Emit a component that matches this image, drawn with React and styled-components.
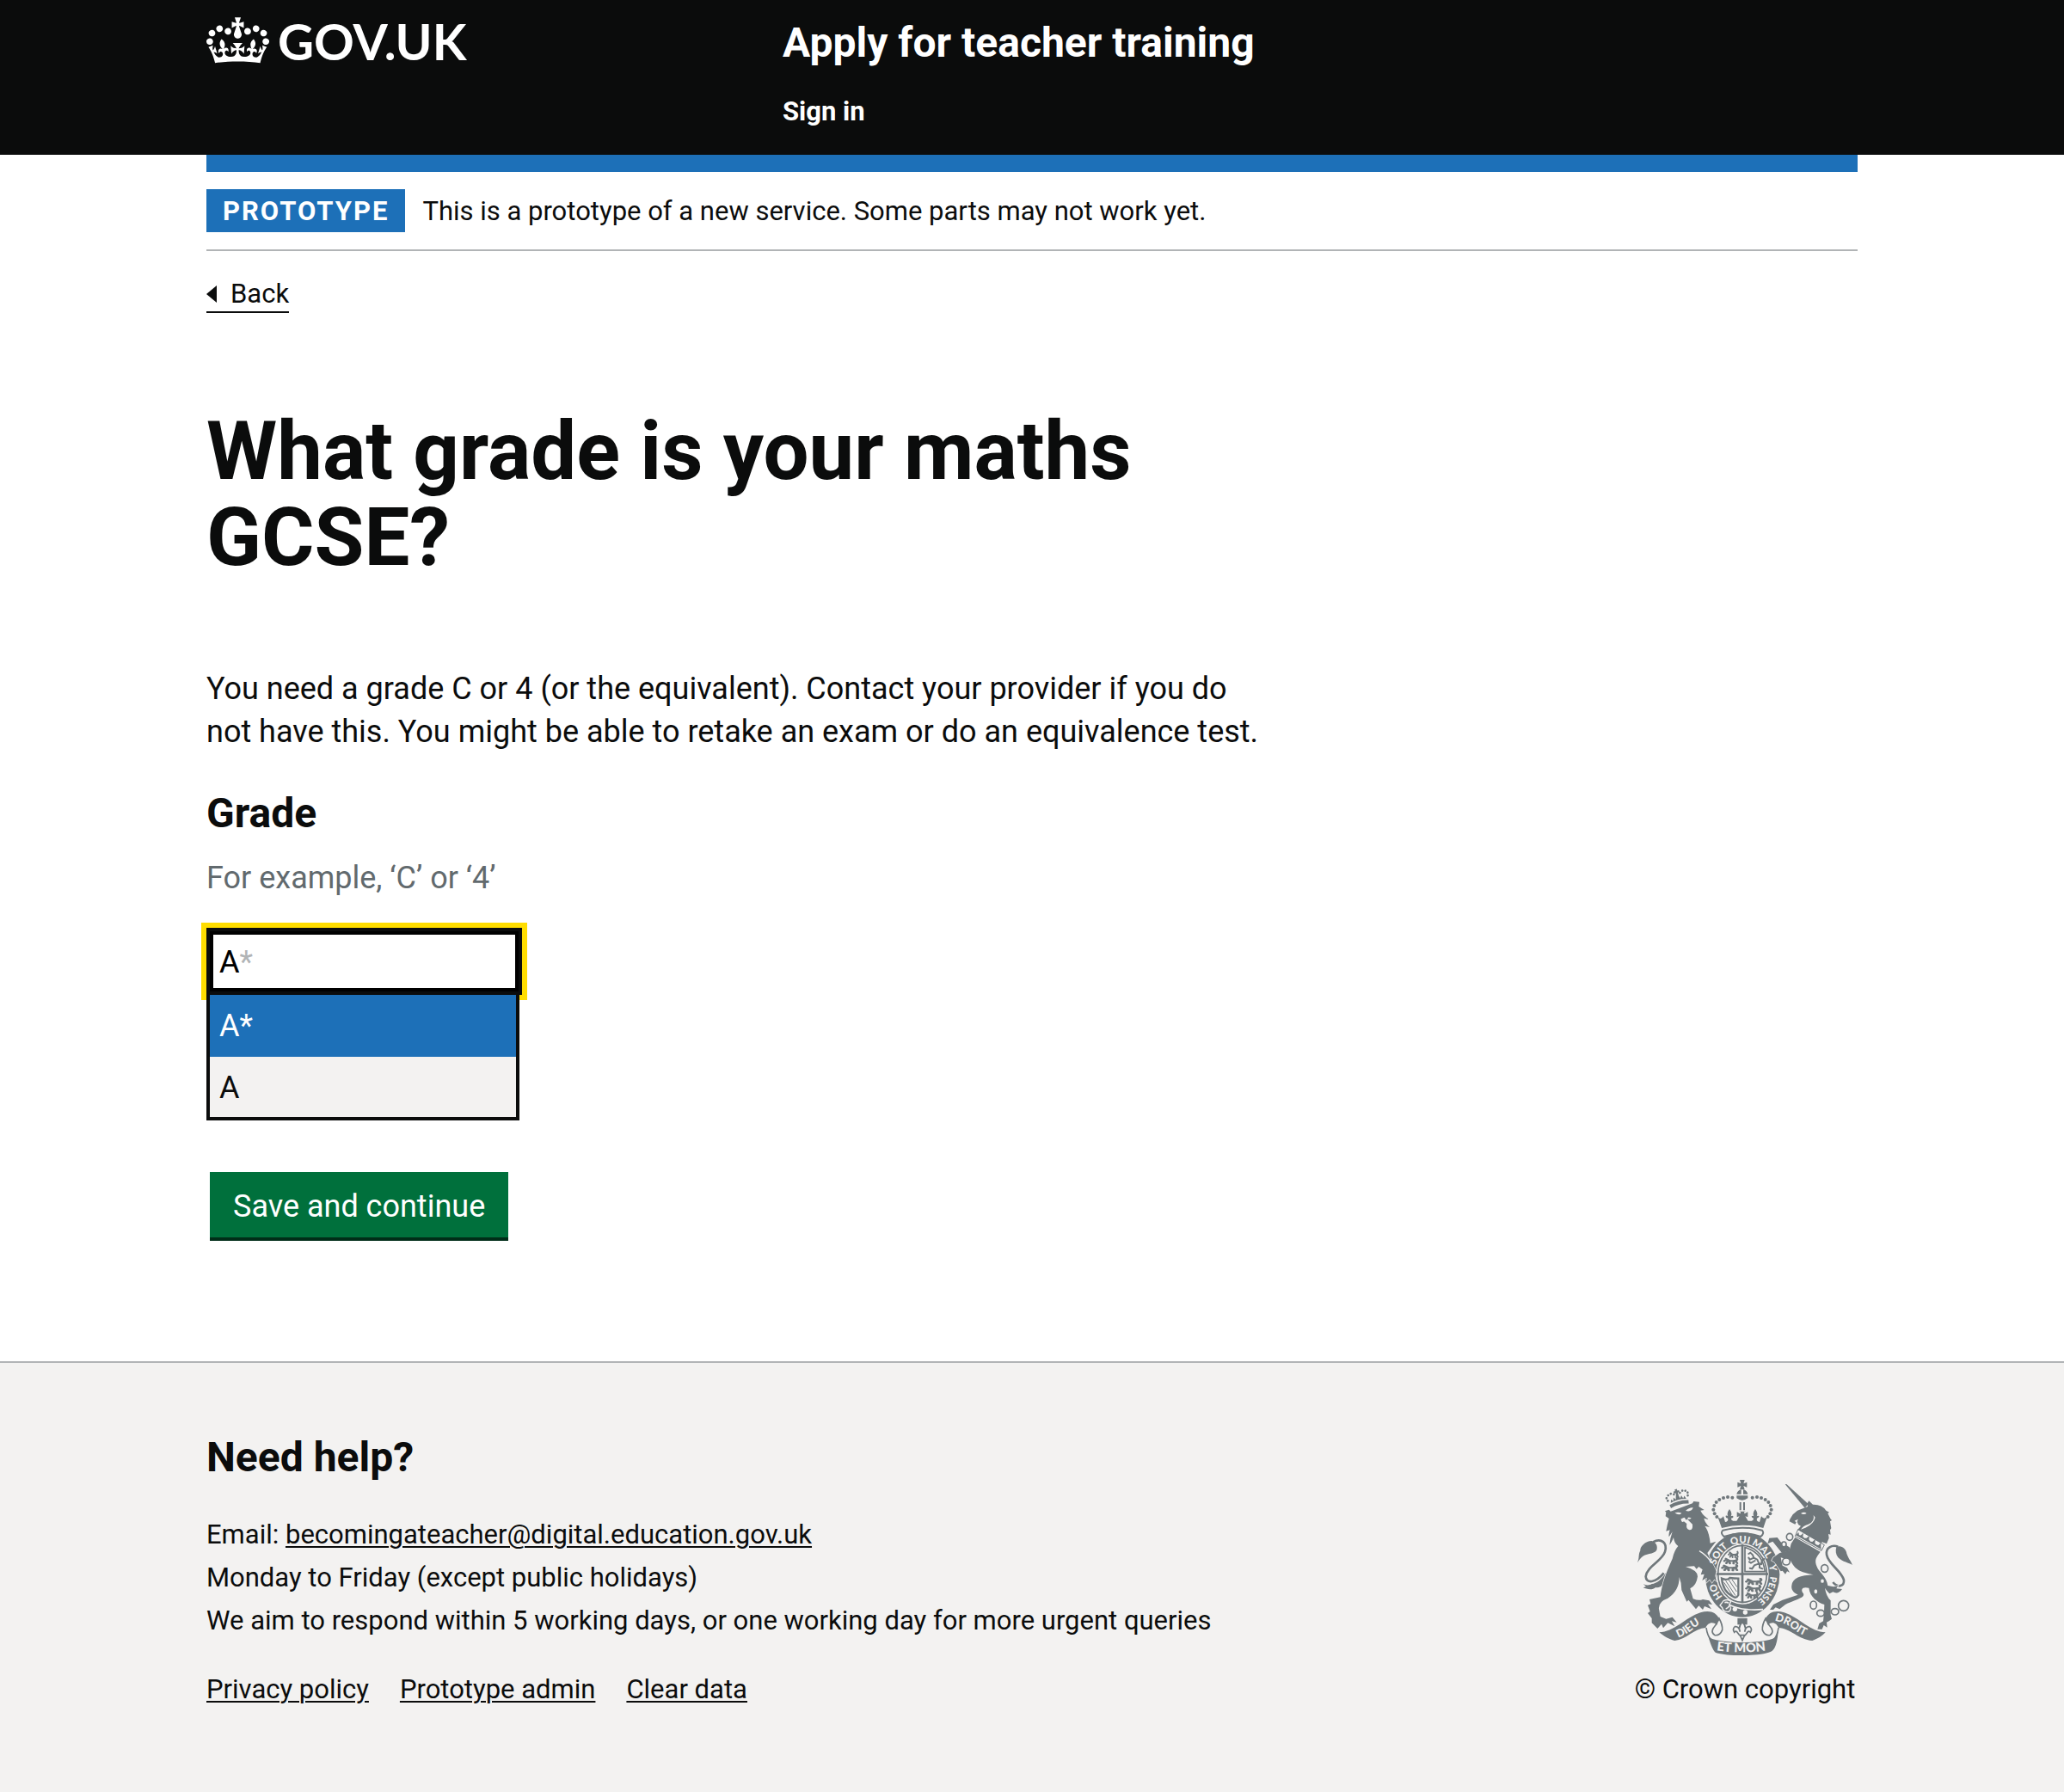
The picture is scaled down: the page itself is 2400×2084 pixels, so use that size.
import React, { useState } from "react";
import styled, { createGlobalStyle } from "styled-components";

const ink = "#0b0c0c";
const blue = "#1d70b8";
const rule = "#b1b4b6";
const pale = "#f3f2f1";
const crestGrey = "#6f777b";

const GlobalStyle = createGlobalStyle`
  *, *::before, *::after { box-sizing: border-box; }
  html { background: ${pale}; }
  body {
    margin: 0;
    background: #fff;
    color: ${ink};
    font-family: Roboto, "Liberation Sans", sans-serif;
    font-size: 36px;
    line-height: 50px;
  }
`;

const Container = styled.div`
  max-width: 1920px;
  width: 80%;
  margin: 0 auto;
`;

const Header = styled.header`
  background: ${ink};
  color: #fff;
`;

const HeaderGrid = styled(Container)`
  display: grid;
  grid-template-columns: 67fr 125fr;
  align-items: start;
  padding: 20px 0 25px;
`;

const Logo = styled.a`
  display: inline-flex;
  align-items: flex-start;
  gap: 10px;
  color: #fff;
  font-family: Lato, Roboto, sans-serif;
  font-size: 58px;
  font-weight: 700;
  line-height: 56px;
  text-decoration: none;
`;

const Crown = styled.svg`
  display: block;
  width: 73px;
  height: 54px;
  fill: currentColor;
`;

const ServiceName = styled.a`
  display: block;
  color: #fff;
  font-size: 48px;
  font-weight: 700;
  line-height: 60px;
  text-decoration: none;
`;

const HeaderNav = styled.nav`
  margin-top: 25px;
  font-size: 31px;
  font-weight: 700;
`;

const HeaderNavLink = styled.a`
  color: #fff;
  text-decoration: none;
`;

const BlueBar = styled.div`
  height: 20px;
  background: ${blue};
`;

const PhaseBanner = styled.div`
  display: flex;
  align-items: baseline;
  gap: 20px;
  padding: 20px 0;
  border-bottom: 2px solid ${rule};
  font-size: 31px;
  line-height: 48px;
`;

const PhaseTag = styled.strong`
  padding: 2px 19px 0;
  background: ${blue};
  color: #fff;
  letter-spacing: 2px;
  text-transform: uppercase;
`;

const BackLink = styled.a`
  display: inline-flex;
  align-items: center;
  gap: 16px;
  margin-top: 28px;
  padding-top: 2px;
  border-bottom: 2px solid ${ink};
  color: ${ink};
  font-size: 31px;
  line-height: 40px;
  text-decoration: none;

  &::before {
    content: "";
    border: 10px solid transparent;
    border-left-width: 0;
    border-right: 12px solid ${ink};
  }
`;

const Main = styled.main`
  max-width: 1240px;
  padding: 110px 0 144px;
`;

const Title = styled.h1`
  margin: 0 0 101px;
  font-size: 94px;
  font-weight: 700;
  line-height: 100px;
`;

const Paragraph = styled.p`
  margin: 0 0 40px;
`;

const GradeLabel = styled.label`
  display: block;
  margin-bottom: 20px;
  font-size: 48px;
  font-weight: 700;
  line-height: 60px;
`;

const Hint = styled.div`
  margin-bottom: 33px;
  color: #626a6e;
`;

const Autocomplete = styled.div`
  position: relative;
  width: 367px;
  margin-bottom: 60px;
`;

const fieldStyle = `
  display: block;
  width: 100%;
  height: 78px;
  margin: 0;
  padding: 2px 11px 0;
  border: 4px solid ${ink};
  border-radius: 0;
  font: inherit;
`;

const HintInput = styled.input`
  ${fieldStyle}
  position: absolute;
  inset: 0 0 auto;
  background: #fff;
  color: ${rule};
`;

const GradeInput = styled.input`
  ${fieldStyle}
  position: relative;
  outline: 6px solid #ffdd00;
  background: transparent;
  box-shadow: inset 0 0 0 4px #000;
  color: #000;
`;

const Menu = styled.ul`
  position: relative;
  margin: 0 3px 0 0;
  padding: 0;
  border: 4px solid ${ink};
  border-top: 0;
  background: ${pale};
  list-style: none;
`;

const Option = styled.li`
  padding: 11px 11px 9px;
  border-bottom: 2px solid ${(p) => (p.$active ? blue : rule)};
  background: ${(p) => (p.$active ? blue : pale)};
  color: ${(p) => (p.$active ? "#fff" : ink)};

  &:last-child { border-bottom: 0; }
`;

const SaveButton = styled.button`
  display: block;
  margin: 0 4px;
  padding: 15px 27px 11px;
  border: 0;
  border-radius: 0;
  background: #00703c;
  box-shadow: 0 4px 0 #002d18;
  color: #fff;
  font: inherit;
  cursor: pointer;
`;

const Footer = styled.footer`
  border-top: 2px solid ${rule};
  background: ${pale};
  font-size: 31px;
`;

const FooterRow = styled(Container)`
  display: flex;
  align-items: flex-end;
  justify-content: space-between;
  gap: 60px;
  padding: 80px 0 95px;
`;

const FooterTitle = styled.h2`
  margin: 0 0 35px;
  font-size: 48px;
  font-weight: 700;
  line-height: 60px;
`;

const PlainList = styled.ul`
  display: flex;
  flex-direction: ${(p) => (p.$inline ? "row" : "column")};
  gap: ${(p) => (p.$inline ? "36px" : "0")};
  margin: 0;
  padding: 0;
  list-style: none;
`;

const FooterNav = styled.nav`
  margin-top: 30px;
`;

const FooterLink = styled.a`
  color: ${ink};
  text-decoration: underline;
  text-decoration-thickness: 2px;
  text-underline-offset: 3px;
`;

const Copyright = styled.a`
  display: flex;
  flex: none;
  flex-direction: column;
  align-items: center;
  gap: 15px;
  min-width: 262px;
  color: ${ink};
  text-decoration: none;
`;

const Crest = styled.svg`
  display: block;
  width: 250px;
  height: 204px;
  font-family: Lato, sans-serif;
  font-weight: 900;
`;

const CrownIcon = () => (
  <Crown viewBox="0 0 132 97" aria-hidden="true">
    <path
      fillRule="evenodd"
      d="M25 30.2c3.5 1.5 7.7-.2 9.1-3.7 1.5-3.6-.2-7.8-3.9-9.2-3.6-1.4-7.6.3-9.1 3.9-1.4 3.5.3 7.5 3.9 9zM9 39.5c3.6 1.5 7.8-.2 9.2-3.7 1.5-3.6-.2-7.8-3.9-9.1-3.6-1.5-7.6.2-9.1 3.8-1.4 3.5.3 7.5 3.8 9zM4.4 57.2c3.5 1.5 7.7-.2 9.1-3.8 1.5-3.6-.2-7.7-3.9-9.1-3.5-1.5-7.6.3-9.1 3.8-1.4 3.5.3 7.6 3.9 9.1zm38.3-21.4c3.5 1.5 7.7-.2 9.1-3.8 1.5-3.6-.2-7.7-3.9-9.1-3.6-1.5-7.6.3-9.1 3.8-1.3 3.6.4 7.7 3.9 9.1zm64.4-5.6c-3.6 1.5-7.8-.2-9.1-3.7-1.5-3.6.2-7.8 3.8-9.2 3.6-1.4 7.7.3 9.2 3.9 1.3 3.5-.4 7.5-3.9 9zm15.9 9.3c-3.6 1.5-7.7-.2-9.1-3.7-1.5-3.6.2-7.8 3.7-9.1 3.6-1.5 7.7.2 9.2 3.8 1.5 3.5-.3 7.5-3.8 9zm4.7 17.7c-3.6 1.5-7.8-.2-9.2-3.8-1.5-3.6.2-7.7 3.9-9.1 3.6-1.5 7.7.3 9.2 3.8 1.3 3.5-.4 7.6-3.9 9.1zM89.3 35.8c-3.6 1.5-7.8-.2-9.2-3.8-1.4-3.6.2-7.7 3.9-9.1 3.6-1.5 7.7.3 9.2 3.8 1.4 3.6-.3 7.7-3.9 9.1zM69.7 17.7l8.9 4.7V9.3l-8.9 2.8c-.2-.3-.5-.6-.9-.9L72.4 0H59.6l3.5 11.2c-.3.3-.6.5-.9.9l-8.8-2.8v13.1l8.8-4.7c.3.3.6.7.9.9l-5 15.4v.1c-.2.8-.4 1.6-.4 2.4 0 4.1 3.1 7.5 7 8.1h.2c.3 0 .7.1 1 .1.4 0 .7 0 1-.1h.2c4-.6 7.1-4.1 7.1-8.1 0-.8-.1-1.7-.4-2.4V34l-5.1-15.4c.4-.2.7-.6 1-.9zM66 92.8c16.9 0 32.8 1.1 47.1 3.2 4-16.9 8.9-26.7 14-33.5l-9.6-3.4c1 4.9 1.1 7.2 0 10.2-1.5-1.4-3-4.3-4.2-8.7L108.6 76c2.8-2 5-3.2 7.5-3.3-4.4 9.4-10 11.9-13.6 11.2-4.3-.8-6.3-4.6-5.6-7.9 1-4.7 5.7-5.9 8-.5 4.3-8.7-3-11.4-7.6-8.8 7.1-7.2 7.9-13.5 2.1-21.1-8 6.1-8.1 12.3-4.5 20.8-4.7-5.4-12.1-2.5-9.5 6.2 3.4-5.2 7.9-2 7.2 3.1-.6 4.3-6.4 7.8-13.5 7.2-10.3-.9-10.9-8-11.2-13.8 2.5-.5 7.1 1.8 11 7.3L80.2 60c-4.1 4.4-8 5.3-12.3 5.4 1.4-4.4 8-11.6 8-11.6H55.5s6.4 7.2 7.9 11.6c-4.2-.1-8-1-12.3-5.4l1.4 16.4c3.9-5.5 8.5-7.7 10.9-7.3-.3 5.8-.9 12.8-11.1 13.8-7.2.6-12.9-2.9-13.5-7.2-.7-5 3.8-8.3 7.1-3.1 2.7-8.7-4.6-11.6-9.4-6.2 3.7-8.5 3.6-14.7-4.6-20.8-5.8 7.6-5 13.9 2.2 21.1-4.7-2.6-11.9.1-7.7 8.8 2.3-5.5 7.1-4.2 8.1.5.7 3.3-1.3 7.1-5.7 7.9-3.5.7-9-1.8-13.5-11.2 2.5.1 4.7 1.3 7.5 3.3l-4.7-15.4c-1.2 4.4-2.7 7.2-4.3 8.7-1.1-3-.9-5.3 0-10.2l-9.5 3.4c5 6.9 9.9 16.7 14 33.5 14.8-2.1 30.8-3.2 47.7-3.2z"
    />
  </Crown>
);

/* Pearls along the left arch of the large crown; the right arch mirrors them. */
const pearls = [
  [373, 122], [357, 120], [342, 123], [328, 129], [317, 138],
  [310, 150], [307, 164], [311, 178], [319, 189],
];

const chainRings = [
  [573, 259, 11, 12, 0], [553, 285, 8, 9, 1], [561, 345, 13, 12, 0],
  [695, 369, 12, 13, 0], [687, 413, 8, 9, 1], [664, 449, 8, 10, 1],
  [656, 497, 11, 14, 0], [681, 525, 13, 11, 0], [731, 520, 13, 11, 0],
  [761, 499, 18, 18, 0],
];

const walkingLion =
  "M0 9c4-6 7-6 10-3l5 3 12-1c5-1 6-5 4-9m-22 9-4 9m7-8 2 9m10-10-1 10m5-11 4 10M4 1l5 4";

const CrestIcon = () => (
  <Crest viewBox="42 60 750 612" fill={crestGrey} aria-hidden="true">
    <defs>
      <path id="garter" d="M408 500A97 110 0 0 1 408 280A97 110 0 0 1 408 500" />
      <path id="scrollLeft" d="M184 611Q218 598 240 576Q262 560 292 554" />
      <path id="scrollMid" d="M318 655Q408 668 500 654" />
      <path id="scrollRight" d="M520 551Q560 560 588 582Q612 602 650 612" />
    </defs>

    {/* royal crown */}
    <path d="M399 60h17l-4 13 12-5v18l-12-5 4 13h-17l4-13-12 5V68l12 5z" />
    <path d="M388 110q3-14 16-16v16zM411 110V94q13 2 16 16zM388 115h39v9q-20 14-39 0z" />
    {pearls.map(([x, y]) => (
      <React.Fragment key={x}>
        <circle cx={x} cy={y} r="6" />
        <circle cx={816 - x} cy={y} r="6" />
      </React.Fragment>
    ))}
    <path d="M398 138h6v28h-6zM411 138h6v28h-6z" />
    <path d="M336 228L321 186Q330 203 342 187L348 207Q361 205 357 194Q348 192 350 185Q355 183 358 187Q352 176 363 162Q374 176 368 187Q374 182 377 189Q375 194 369 194Q368 206 388 203L398 187L389 190V172L400 178Q406 172 397 170H420Q410 172 416 178L427 172V190L418 187L428 203Q448 206 447 194Q440 193 440 187Q444 183 448 187Q442 176 453 162Q464 176 458 187Q463 183 467 187Q465 193 459 194Q456 206 468 207L474 187Q486 203 496 184L481 228Q408 208 336 228Z" />
    <path d="M340 236Q408 218 477 236Q486 246 472 258Q408 236 344 258Q330 246 340 236Z" fill="none" stroke={crestGrey} strokeWidth="6" />

    {/* garter and shield */}
    <ellipse cx="408" cy="391" rx="130" ry="148" />
    <ellipse cx="408" cy="388" rx="92" ry="106" fill={pale} />
    <ellipse cx="408" cy="388" rx="85" ry="99" fill="none" stroke={crestGrey} strokeWidth="5" />
    <path d="M404 284h8v206h-8zM318 385h180v7H318z" />
    <path d="M417 380V296Q478 312 487 380Z" fill="none" stroke={crestGrey} strokeWidth="5" />
    <g fill="none" stroke={crestGrey} strokeWidth="6" strokeLinecap="round">
      <path d={walkingLion} transform="translate(360 312)" />
      <path d={walkingLion} transform="translate(345 334) scale(1.4 1)" />
      <path d={walkingLion} transform="translate(338 358) scale(1.6 1)" />
      <path d={walkingLion} transform="translate(422 406) scale(1.6 1)" />
      <path d={walkingLion} transform="translate(422 430) scale(1.5 1)" />
      <path d={walkingLion} transform="translate(422 454) scale(1.2 1)" />
      <path d="M430 318l6-4 8 8 4 10 12 6 6 14 8 2 2-12 8-6M448 332l-14 6-4-6M452 342l-14 8-6-4M466 352l-16 6-8 12-8-2M468 354l0 12 10 4" />
    </g>
    <path d="M336 404Q354 412 364 402Q378 404 394 404V462Q386 476 374 466Q340 450 336 404Z" fill="none" stroke={crestGrey} strokeWidth="7" />
    <path d="M350 412L384 464M360 408L388 450M372 408L390 434M344 418L374 464" stroke={crestGrey} strokeWidth="3" />
    <path d="M340 484Q396 520 480 512" fill="none" stroke={pale} strokeWidth="5" />
    <circle cx="382" cy="511" r="8" fill={pale} />
    <circle cx="418" cy="522" r="8" fill={pale} />
    <path d="M342 482q16-8 26 2l-6 12q12 14-2 24-20 2-22-14l-8-8z" stroke={pale} strokeWidth="4" />
    <path d="M346 488q10-2 14 2m-10 20q8-2 12-10" fill="none" stroke={pale} strokeWidth="5" />

    {/* lion */}
    <g transform="translate(30 45)">
      <path d="M66 232C95 216 118 235 108 266C98 298 44 318 41 352C42 378 75 375 104 340" fill="none" stroke={crestGrey} strokeWidth="8" />
      <path d="M12 304C20 286 14 276 22 262C20 250 38 228 62 228C76 232 84 246 79 260C70 276 38 270 26 286C20 292 16 298 12 304Z" />
      <path d="M28 374C36 382 50 386 62 378C80 376 96 362 112 338L122 350C112 374 92 394 76 390C62 402 44 396 32 391L42 387Z" />
      <path
        stroke={pale}
        strokeWidth="4"
        paintOrder="stroke"
        d="M110 142L112 128L108 124L122 119L128 125L204 97L208 90L228 92L226 108L245 120L232 122Q240 140 262 153L244 149Q248 166 264 180L247 176Q262 195 266 236L286 230L272 248L256 270L268 296L280 318L287 334L283 350L288 368L280 362L272 374L264 362L252 374L254 356L238 366L245 344L233 346L239 328L226 318L218 326L210 316L180 318Q222 330 222 352Q218 384 196 394L206 430Q226 438 240 432L262 436L273 450L258 448L270 466L246 456L240 468L226 454L216 466L190 434L184 440L166 400Q166 374 158 354Q158 402 118 428Q84 440 87 466L92 492L112 500L134 494L149 512L132 508L142 526L118 514L102 532L96 518L82 534L62 514V498L48 480L56 474L48 452L58 448L54 432L92 424Q96 372 134 290Q140 262 154 246Q140 236 138 216Q130 236 124 242Q126 218 134 196L122 214Q120 204 125 190L112 194Q116 170 122 150Z"
      />
      <path d="M228 263Q256 280 270 304" fill="none" stroke={pale} strokeWidth="4" />
      <path d="M142 130Q155 126 166 131Q158 141 142 130ZM180 123Q194 110 206 112Q202 128 180 123ZM162 152Q180 142 200 148Q196 154 186 152L204 170Q206 190 194 190Q180 188 184 168L174 160Q166 166 164 152Z" fill={pale} />
      <path d="M176 144l14-2-4 12h-6z" />
      {/* small crown */}
      <g transform="translate(158 98) rotate(-15)">
        <path d="M-34-4Q0-14 34-4L32 8Q0-2-32 8ZM-28-10l4-12 6 8 4-12 6 9 4-14h8l4 14 6-9 4 12 6-8 4 12Q0-18-28-10Z" />
        <path d="M-3-52h8v6h6v7h-6v10h-8v-10h-6v-7h6z" />
        {[[-36, -20], [-38, -30], [-30, -38], [-20, -41], [-10, -36], [12, -36], [22, -41], [32, -38], [38, -30], [36, -20]].map(([x, y]) => (
          <circle key={x} cx={x} cy={y} r="4" />
        ))}
      </g>
    </g>

    {/* unicorn */}
    <g transform="translate(480 45)">
      <path d="M77 30L82 30L158 99L146 113Z" />
      <path d="M262 248C240 240 218 252 222 276C228 310 272 330 282 364C284 388 260 392 244 372" fill="none" stroke={crestGrey} strokeWidth="8" />
      <path d="M256 250C270 240 290 254 292 272C298 290 306 296 312 312C300 304 278 302 262 286C254 276 252 262 256 250Z" />
      <path d="M94 152L104 136L120 122L156 108L154 98L160 88L174 101Q206 100 220 122L231 128L226 132L235 150L240 156L234 160L238 184L234 190L236 206L228 204L230 218L222 238L206 232L200 242L126 194L120 190L132 176L124 172L118 160L112 170L92 160Z" />
      <path d="M176 138Q182 160 158 170Q140 174 132 188L148 182Q178 168 182 146ZM132 132Q144 124 152 132Q142 138 132 132ZM110 158l12-6-4 12z" fill={pale} />
      <path d="M122 188L214 242L204 262L112 212Z" fill={pale} stroke={crestGrey} strokeWidth="3" />
      <path
        transform="translate(114 208) rotate(29)"
        d="M0 0L4-14 10-6 16-8 20-20 24-8 32-6 38-9 43-22 48-9 56-6 62-8 67-22 72-8 80-6 86-8 90-20 96-8 102 0Z"
      />
      <path
        stroke={pale}
        strokeWidth="4"
        paintOrder="stroke"
        d="M112 216L200 266C186 286 178 292 188 318C194 336 222 352 226 384L246 388L262 384L256 394L276 396Q262 416 244 406L232 412Q222 402 216 392Q220 420 236 436V486L240 500L230 508L222 512L224 530L212 522L206 536L190 536L196 516L210 508L213 478L214 450C190 442 164 424 160 392C136 386 130 398 141 412C146 426 126 428 78 450L58 466L44 460L36 468L24 468L36 450L68 434L122 416C104 408 98 396 100 384C102 358 130 348 176 346C150 338 116 340 96 296L62 286L68 314L84 322L93 338L84 334L78 344L68 332L62 334L40 302L30 296L36 286L58 270L92 262L98 238Z"
      />
      <path d="M96 262L66 270L34 230L16 238L22 218L50 216L62 232L92 250Z" />
    </g>
    {chainRings.map(([x, y, rx, ry, solid]) => (
      <ellipse key={x + y} cx={x} cy={y} rx={rx} ry={ry} fill={solid || y < 400 ? pale : "none"} stroke={crestGrey} strokeWidth="5" />
    ))}
    <g fill={pale} fontSize="34">
      <text><textPath href="#garter" startOffset="12%">HO</textPath></text>
      <text><textPath href="#garter" startOffset="30%">SOIT</textPath></text>
      <text><textPath href="#garter" startOffset="44%">QUI</textPath></text>
      <text><textPath href="#garter" startOffset="55%">MAL</textPath></text>
      <text><textPath href="#garter" startOffset="70%">Y</textPath></text>
      <text fontSize="32"><textPath href="#garter" startOffset="76%">PENSE</textPath></text>
    </g>

    {/* motto scroll */}
    <path d="M118 592C168 592 210 540 262 523C292 514 318 520 328 548L318 566C304 552 286 560 280 576C240 578 212 618 172 621C150 616 136 606 118 592Z" />
    <path d="M698 592C648 592 606 540 554 523C524 514 498 520 488 548L498 566C512 552 528 560 534 576C576 578 604 618 652 621C672 614 684 606 698 592Z" />
    <path d="M296 612C345 632 471 632 520 612Q532 596 534 576Q530 652 506 660C470 676 350 676 314 662Q300 650 283 584Q288 604 296 612Z" />
    <g fill="none" stroke={crestGrey} strokeWidth="5">
      <path d="M325 540Q340 566 338 584Q330 604 312 602Q294 590 312 570L320 560M282 576Q286 606 300 618" />
      <path d="M491 540Q476 566 478 584Q486 604 504 602Q522 590 504 570L496 560M534 576Q530 606 516 618" />
    </g>
    <g fill={pale} fontSize="38">
      <text><textPath href="#scrollLeft">DIEU</textPath></text>
      <text fontSize="44"><textPath href="#scrollMid">ET MON</textPath></text>
      <text><textPath href="#scrollRight">DROIT</textPath></text>
    </g>

    {/* fleur-de-lis below the shield */}
    <path d="M391 543h34v22h-34z" />
    <path d="M408 556Q424 572 416 590Q420 570 434 572Q444 580 436 592Q430 584 424 594L418 602H398L392 594Q386 584 380 592Q372 580 382 572Q396 570 400 590Q392 572 408 556ZM400 602L408 620L416 602" fill={pale} stroke={crestGrey} strokeWidth="5" />
  </Crest>
);

const options = ["A*", "A"];

export default function App() {
  const [grade, setGrade] = useState("A");
  return (
    <>
      <GlobalStyle />
      <Header>
        <HeaderGrid>
          <div>
            <Logo href="#home">
              <CrownIcon />
              GOV.UK
            </Logo>
          </div>
          <div>
            <ServiceName href="#service">Apply for teacher training</ServiceName>
            <HeaderNav>
              <HeaderNavLink href="#sign-in">Sign in</HeaderNavLink>
            </HeaderNav>
          </div>
        </HeaderGrid>
      </Header>

      <Container>
        <BlueBar />
        <PhaseBanner>
          <PhaseTag>Prototype</PhaseTag>
          <span>This is a prototype of a new service. Some parts may not work yet.</span>
        </PhaseBanner>
        <BackLink href="#back">Back</BackLink>

        <Main>
          <Title>What grade is your maths GCSE?</Title>
          <Paragraph>
            You need a grade C or 4 (or the equivalent). Contact your provider if you do not have
            this. You might be able to retake an exam or do an equivalence test.
          </Paragraph>
          <GradeLabel htmlFor="grade">Grade</GradeLabel>
          <Hint id="grade-hint">For example, ‘C’ or ‘4’</Hint>
          <Autocomplete>
            <HintInput value={grade === "A" ? "A*" : ""} readOnly tabIndex={-1} aria-hidden="true" />
            <GradeInput
              id="grade"
              type="text"
              role="combobox"
              autoComplete="off"
              aria-expanded="true"
              aria-controls="grade-options"
              aria-describedby="grade-hint"
              value={grade}
              onChange={(e) => setGrade(e.target.value)}
            />
            <Menu id="grade-options" role="listbox">
              {options.map((o, i) => (
                <Option key={o} role="option" aria-selected={i === 0} $active={i === 0} onClick={() => setGrade(o)}>
                  {o}
                </Option>
              ))}
            </Menu>
          </Autocomplete>
          <SaveButton type="submit">Save and continue</SaveButton>
        </Main>
      </Container>

      <Footer>
        <FooterRow>
          <div>
            <FooterTitle>Need help?</FooterTitle>
            <PlainList>
              <li>
                Email:{" "}
                <FooterLink href="mailto:becomingateacher@digital.education.gov.uk">
                  becomingateacher@digital.education.gov.uk
                </FooterLink>
              </li>
              <li>Monday to Friday (except public holidays)</li>
              <li>We aim to respond within 5 working days, or one working day for more urgent queries</li>
            </PlainList>
            <FooterNav>
              <PlainList $inline>
                <li><FooterLink href="#privacy">Privacy policy</FooterLink></li>
                <li><FooterLink href="#admin">Prototype admin</FooterLink></li>
                <li><FooterLink href="#clear">Clear data</FooterLink></li>
              </PlainList>
            </FooterNav>
          </div>
          <Copyright href="#copyright">
            <CrestIcon />
            <span>© Crown copyright</span>
          </Copyright>
        </FooterRow>
      </Footer>
    </>
  );
}
